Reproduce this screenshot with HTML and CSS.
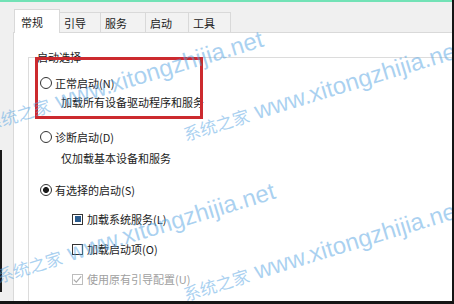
FILE: index.html
```html
<!DOCTYPE html>
<html lang="zh-CN">
<head>
<meta charset="utf-8">
<title>系统配置</title>
<link rel="stylesheet" href="styles.css">
</head>
<body>
<div class="frame">
  <div class="tabs">
    <div class="tab active">常规</div>
    <div class="tab t2">引导</div>
    <div class="tab t3">服务</div>
    <div class="tab t4">启动</div>
    <div class="tab t5">工具</div>
  </div>
  <div class="panel">
    <fieldset class="group">
      <legend>启动选择</legend>
      <div class="opt"><span class="radio"></span><span>正常启动(N)</span></div>
      <div class="desc d1">加载所有设备驱动程序和服务</div>
      <div class="opt o2"><span class="radio"></span><span>诊断启动(D)</span></div>
      <div class="desc d2">仅加载基本设备和服务</div>
      <div class="opt o3"><span class="radio on"></span><span>有选择的启动(S)</span></div>
      <div class="opt sub c1"><span class="check part"></span><span>加载系统服务(L)</span></div>
      <div class="opt sub c2"><span class="check"></span><span>加载启动项(O)</span></div>
      <div class="opt sub c3 disabled"><span class="check dis"><svg viewBox="0 0 11 11" width="11" height="11"><path d="M1.8 5.6 L4.3 8.2 L9.2 2.4" fill="none" stroke="#a9a9a9" stroke-width="1.1"/></svg></span><span>使用原有引导配置(U)</span></div>
    </fieldset>
  </div>
  <div class="mark"></div>
  <div class="wm wm-a"><span class="wm-cn">系统之家</span><span class="wm-en"> www.xitongzhijia.net</span></div>
  <div class="wm wm-b"><span class="wm-cn">系统之家</span><span class="wm-en"> www.xitongzhijia.net</span></div>
  <div class="wm wm-c"><span class="wm-cn">系统之家</span><span class="wm-en"> www.xitongzhijia.net</span></div>
  <div class="wm wm-d"><span class="wm-cn">系统之家</span><span class="wm-en"> www.xitongzhijia.net</span></div>
</div>
</body>
</html>
```

FILE: styles.css
```css
* { box-sizing: border-box; }
html, body { margin: 0; padding: 0; }
body {
  background: #151515;
  width: 454px;
  height: 304px;
  overflow: hidden;
  font-family: "Noto Sans CJK SC", "Noto Sans", sans-serif;
  font-size: 11px;
  color: #1b1b1b;
}
.frame {
  position: relative;
  width: 452px;
  height: 301px;
  border-top: 2px solid #72e2b6;
  background: linear-gradient(#1a1a1a, #1a1a1a) 0 148px / 2px 142px no-repeat, #f0f0f0;
  overflow: hidden;
  display: flex;
  flex-direction: column;
}
.tabs {
  display: flex;
  align-items: flex-end;
  height: 24px;
  margin-top: 7px;
  padding-left: 14px;
  position: relative;
  z-index: 1;
  flex: none;
}
.tab {
  display: flex;
  align-items: center;
  height: 20px;
  margin-bottom: 1px;
  margin-left: -1px;
  padding-left: 4px;
  border: 1px solid #d9d9d9;
  border-bottom: 0;
  background: #f2f2f2;
  line-height: 14px;
}
.tab.active {
  height: 24px;
  width: 46px;
  margin: 0;
  padding-left: 6px;
  background: #fff;
  position: relative;
  z-index: 2;
}
.t2 { width: 42px; }
.t3 { width: 46px; }
.t4 { width: 44px; }
.t5 { width: 43px; }
.panel {
  flex: 1;
  width: 470px;
  margin-left: 13px;
  margin-top: -1px;
  padding-left: 14px;
  border-left: 1px solid #d9d9d9;
  border-top: 1px solid #d9d9d9;
  background: #fff;
}
.group {
  margin: 17px 0 0 0;
  width: 500px;
  height: 400px;
  padding: 12px 0 0 11px;
  border: 1px solid #dcdcdc;
  min-width: 0;
}
.group legend {
  padding: 0 2px;
  margin-left: -5px;
  line-height: 14px;
}
.opt {
  display: flex;
  align-items: center;
  height: 14px;
  line-height: 14px;
}
.radio {
  width: 12px;
  height: 12px;
  margin-right: 3px;
  border: 1px solid #333;
  border-radius: 50%;
  background: #fff;
  flex: none;
}
.radio.on {
  background: radial-gradient(circle at center, #1b1b1b 0 2.7px, #fff 3.2px);
}
.desc { line-height: 14px; margin-left: 21px; }
.d1 { margin-top: 5px; }
.o2 { margin-top: 21px; }
.d2 { margin-top: 7px; }
.o3 { margin-top: 18px; }
.sub { margin-left: 32px; }
.c1 { margin-top: 15px; }
.c2 { margin-top: 16px; }
.c3 { margin-top: 16px; }
.check {
  width: 11px;
  height: 11px;
  margin-right: 4px;
  border: 1px solid #333;
  background: #fff;
  flex: none;
  display: flex;
  align-items: center;
  justify-content: center;
}
.check.part::after {
  content: "";
  width: 6px;
  height: 6px;
  background: #2a5b8d;
}
.check.dis { border-color: #bdbdbd; }
.check svg { display: block; flex: none; }
.disabled { color: #a0a0a0; }
.mark {
  position: absolute;
  left: 35px;
  top: 55px;
  width: 168px;
  height: 62px;
  border: 3px solid #cc2a2f;
  z-index: 3;
}
.wm {
  position: absolute;
  white-space: nowrap;
  height: 24px;
  line-height: 24px;
  transform-origin: 0 100%;
  transform: rotate(-17deg);
  color: rgba(86, 164, 226, 0.5);
  z-index: 4;
  pointer-events: none;
}
.wm-cn { font-family: "Noto Sans CJK SC", sans-serif; font-size: 17px; }
.wm-en { font-family: "Liberation Sans", Arial, sans-serif; font-size: 24px; }
.wm-a { left: -12px; top: 109px; }
.wm-b { left: 187px; top: 119px; }
.wm-c { left: 0; top: 261px; }
.wm-d { left: 187px; top: 279px; }
```
